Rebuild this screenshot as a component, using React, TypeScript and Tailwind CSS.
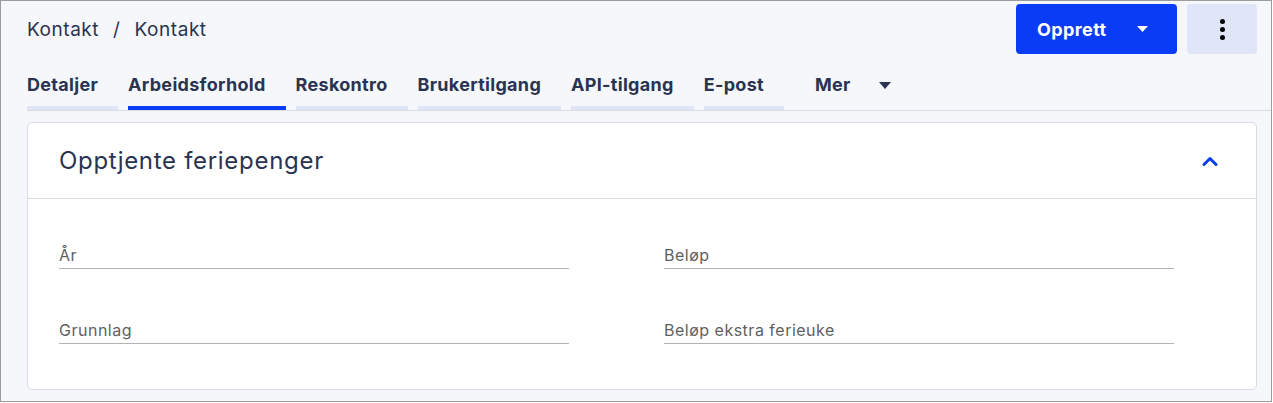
import React from 'react';

const tabs = [
  { label: 'Detaljer', active: false },
  { label: 'Arbeidsforhold', active: true },
  { label: 'Reskontro', active: false },
  { label: 'Brukertilgang', active: false },
  { label: 'API-tilgang', active: false },
  { label: 'E-post', active: false },
];

function Field({ label }: { label: string }) {
  return (
    <div className="border-b border-[#b4b4b4] pb-[3px]">
      <span className="block text-[16px] leading-[20px] tracking-[0.5px] text-[#5f5f5f]">{label}</span>
    </div>
  );
}

export default function App() {
  return (
    <div className="h-[402px] w-[1272px] border border-[#9c9c9c] bg-[#f5f7fb] pl-[26px] font-['Inter',sans-serif] text-[#2a3350]">
      {/* Header */}
      <div className="flex items-center justify-between pt-[3px] pr-[14px]">
        <div className="flex items-center gap-[14px] text-[19px] leading-none tracking-[0.55px]">
          <span>Kontakt</span>
          <span>/</span>
          <span>Kontakt</span>
        </div>
        <div className="flex items-center gap-[10px]">
          <button className="flex h-[50px] w-[161px] items-center justify-between rounded-[4px] bg-[#0a3cf5] pl-[21px] pr-[29px] text-[18px] font-bold tracking-[0.4px] text-white">
            <span>Opprett</span>
            <svg width="11" height="6" viewBox="0 0 11 6">
              <path d="M0 0 H11 L5.5 6 Z" fill="white" />
            </svg>
          </button>
          <button className="flex h-[50px] w-[70px] flex-col items-center justify-center gap-[3px] rounded-[4px] bg-[#e0e6f8]">
            <span className="h-[5px] w-[5px] rounded-full bg-black" />
            <span className="h-[5px] w-[5px] rounded-full bg-black" />
            <span className="h-[5px] w-[5px] rounded-full bg-black" />
          </button>
        </div>
      </div>

      {/* Tabs */}
      <div className="mt-[20px] flex items-end gap-[10px] border-b border-[#d8dbe2]">
        {tabs.map((t) => (
          <div key={t.label} className="flex flex-col">
            <span className="pr-[20px] text-[18px] font-bold leading-[22px] tracking-[0.3px]">{t.label}</span>
            <span className={`mt-[10px] h-[4px] ${t.active ? 'bg-[#0a3cf5]' : 'bg-[#dfe5f7]'}`} />
          </div>
        ))}
        <div className="ml-[21px] flex flex-col">
          <div className="flex items-center gap-[28px]">
            <span className="text-[18px] font-bold leading-[22px] tracking-[0.3px]">Mer</span>
            <svg width="12" height="7" viewBox="0 0 12 7">
              <path d="M0 0 H12 L6 7 Z" fill="#2a3350" />
            </svg>
          </div>
          <span className="mt-[10px] h-[4px]" />
        </div>
      </div>

      {/* Card */}
      <div className="mt-[11px] mr-[14px] rounded-[5px] border border-[#d8dbe0] bg-white">
        <div className="flex h-[76px] items-center justify-between border-b border-[#d8dbe0] pl-[31px] pr-[38px]">
          <h2 className="text-[24px] font-normal leading-none tracking-[0.7px] text-[#2a3350]">Opptjente feriepenger</h2>
          <svg width="16" height="10" viewBox="0 0 16 10">
            <polyline points="2,8.5 8,2.5 14,8.5" fill="none" stroke="#0a3cf5" strokeWidth="3" strokeLinecap="round" strokeLinejoin="round" />
          </svg>
        </div>
        <div className="grid grid-cols-[510px_510px] gap-x-[95px] gap-y-[51px] pl-[31px] pt-[46px] pb-[45px]">
          <Field label="År" />
          <Field label="Beløp" />
          <Field label="Grunnlag" />
          <Field label="Beløp ekstra ferieuke" />
        </div>
      </div>
    </div>
  );
}
